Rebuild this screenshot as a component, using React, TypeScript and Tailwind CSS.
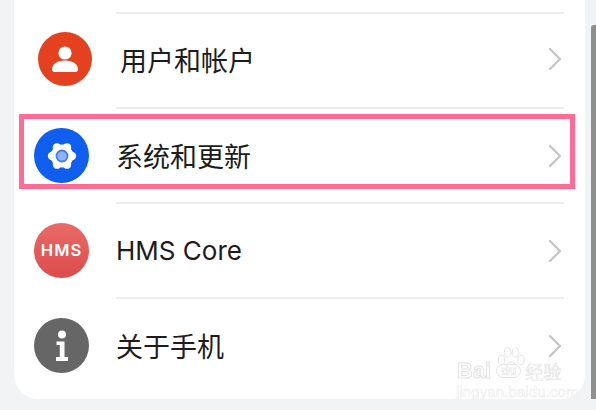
import React from "react";

function Chevron() {
  return (
    <svg width="14" height="24" viewBox="0 0 14 24" fill="none" className="shrink-0">
      <path d="M2 2 L12 12 L2 22" stroke="#c6c6c6" strokeWidth="2.4" strokeLinecap="round" strokeLinejoin="round" />
    </svg>
  );
}

function UserIcon() {
  return (
    <div className="w-[54px] h-[54px] rounded-full bg-[#e5401f] flex items-center justify-center shrink-0">
      <svg width="28" height="28" viewBox="0 0 28 28" fill="#fff">
        <circle cx="14" cy="8" r="6.6" />
        <path d="M1 24.5 C1 18.5 7 15.5 14 15.5 C21 15.5 27 18.5 27 24.5 C27 26 26 27 24.5 27 H3.5 C2 27 1 26 1 24.5 Z" />
      </svg>
    </div>
  );
}

function GearIcon() {
  const lobes = [0, 60, 120, 180, 240, 300];
  return (
    <div className="w-[55px] h-[55px] rounded-full bg-[#0f5ef0] flex items-center justify-center shrink-0">
      <svg width="30" height="30" viewBox="0 0 30 30">
        <circle cx="15" cy="15" r="11.4" fill="#fff" />
        {lobes.map((a) => (
          <circle
            key={a}
            cx={15 + 10 * Math.cos((a * Math.PI) / 180)}
            cy={15 + 10 * Math.sin((a * Math.PI) / 180)}
            r="4.2"
            fill="#fff"
          />
        ))}
        <circle cx="15" cy="15" r="6.4" fill="#3f7df0" />
        <circle cx="15" cy="15" r="4.6" fill="#8fb3f8" />
      </svg>
    </div>
  );
}

function HmsIcon() {
  return (
    <div className="w-[55px] h-[55px] rounded-full bg-gradient-to-b from-[#e96a68] to-[#de4b4c] flex items-center justify-center shrink-0">
      <span className="text-white text-[16.5px] leading-none font-semibold tracking-[1px] font-['Inter',sans-serif]">HMS</span>
    </div>
  );
}

function InfoIcon() {
  return (
    <div className="w-[55px] h-[55px] rounded-full bg-[#666666] flex items-center justify-center shrink-0">
      <svg width="14" height="32" viewBox="0 0 14 32" fill="#fff">
        <circle cx="7" cy="4.5" r="4" />
        <path d="M1.5 11.5 H9.5 V27 H13 V31 H1 V27 H4.8 V15 H1.5 Z" />
      </svg>
    </div>
  );
}

function Row({
  icon,
  label,
  shift,
  last,
  latin,
}: {
  icon: React.ReactNode;
  label: string;
  shift?: boolean;
  last?: boolean;
  latin?: boolean;
}) {
  return (
    <div className="flex flex-col">
      <div className={shift ? "h-[93px] flex items-center pb-[3px]" : "h-[93px] flex items-center"}>
        <div className={shift ? "w-[106px] pl-[24px] shrink-0" : "w-[102px] pl-[20px] shrink-0"}>{icon}</div>
        <span
          className={
            latin
              ? "flex-1 text-[26px] leading-none text-[#1c1c1c] font-['Inter',sans-serif]"
              : "flex-1 text-[27px] leading-none text-[#1c1c1c] font-['Noto_Sans_CJK_SC','Noto_Sans',sans-serif]"
          }
        >
          {label}
        </span>
        <div className="pr-[23px] flex items-center">
          <Chevron />
        </div>
      </div>
      {!last && <div className="h-[2px] ml-[102px] mr-[21px] bg-[#ececec]" />}
    </div>
  );
}

function Watermark() {
  return (
    <div className="absolute left-[456px] top-[346px] w-[110px] h-[54px] pointer-events-none select-none blur-[0.4px]">
      <svg className="absolute left-[41px] top-[1px]" width="28" height="32" viewBox="0 0 28 32" fill="none" stroke="#e4e4e4" strokeWidth="1">
        <ellipse cx="4.5" cy="13" rx="3.2" ry="4.8" />
        <ellipse cx="10.5" cy="5.5" rx="3.4" ry="4.8" />
        <ellipse cx="18.5" cy="5.5" rx="3.4" ry="4.8" />
        <ellipse cx="24" cy="13" rx="3.2" ry="4.8" />
        <path d="M6 26 C6 20 10 15 14 15 C18 15 22 20 22 26" />
      </svg>
      <div className="absolute left-[1px] top-[14px] flex items-center">
        <span className="text-[22px] leading-none font-bold text-white [-webkit-text-stroke:1px_#e4e4e4] font-['Liberation_Sans',sans-serif]">Bai</span>
        <span className="ml-[5px] w-[25px] h-[14px] rounded-full border border-[#e4e4e4] bg-white text-[12px] leading-[12px] text-center font-bold text-white [-webkit-text-stroke:0.6px_#e0e0e0] font-['Liberation_Sans',sans-serif]">du</span>
        <span className="ml-[4px] text-[18px] leading-none text-white [-webkit-text-stroke:0.7px_#e4e4e4] font-['Noto_Sans_CJK_SC',sans-serif]">经验</span>
      </div>
      <div className="absolute left-0 top-[38px] text-[15px] leading-none tracking-[0.1px] text-white [-webkit-text-stroke:0.6px_#ebebeb] font-['Liberation_Sans',sans-serif]">
        jingyan.baidu.com
      </div>
    </div>
  );
}

export default function App() {
  return (
    <div className="relative w-[596px] h-[410px] overflow-hidden bg-[#f1f3f5]">
      <div className="flex items-start h-[399px]">
        <div className="ml-[14px] w-[571px] h-[399px] bg-white rounded-b-[24px] pt-[12px]">
          <div className="h-[2px] ml-[102px] mr-[21px] bg-[#ececec]" />
          <Row icon={<UserIcon />} label="用户和帐户" shift />
          <Row icon={<GearIcon />} label="系统和更新" />
          <Row icon={<HmsIcon />} label="HMS Core" latin />
          <Row icon={<InfoIcon />} label="关于手机" last />
        </div>
        <div className="ml-[6px] mt-[25px] w-[5px] h-[374px] bg-[#8f8f8f] rounded-tl-[3px]" />
      </div>
      <div className="absolute left-[19px] top-[114px] w-[556px] h-[75px] border-[5px] border-[#ff6b94]" />
      <Watermark />
    </div>
  );
}
